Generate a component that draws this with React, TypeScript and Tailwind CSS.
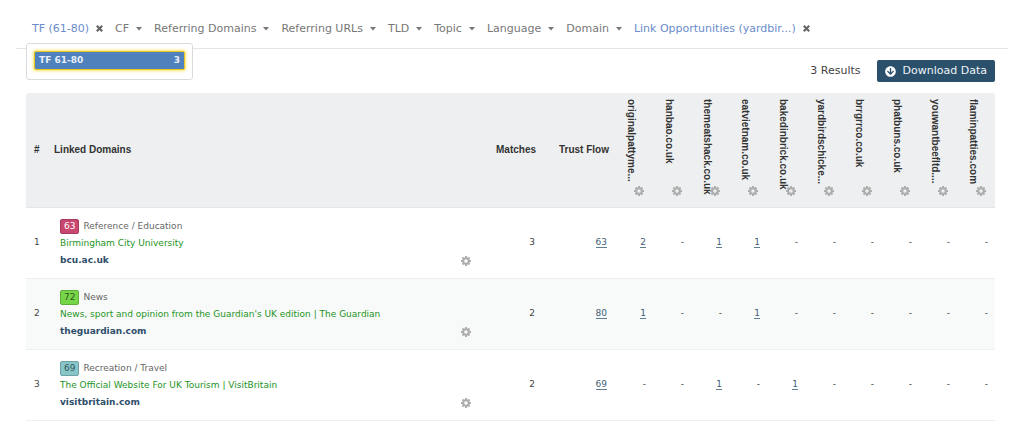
import { FaArrowCircleDown } from "react-icons/fa";
import clsx from "clsx";

type Row = {
  score: number;
  badge: string;
  topic: string;
  title: string;
  domain: string;
  matches: number;
  trustFlow: number;
  links: number[];
};

const FILTERS = [
  { label: "TF (61-80)", active: true },
  { label: "CF" },
  { label: "Referring Domains" },
  { label: "Referring URLs" },
  { label: "TLD" },
  { label: "Topic" },
  { label: "Language" },
  { label: "Domain" },
  { label: "Link Opportunities (yardbir...)", active: true },
];

const SITES = [
  "originalpattyme...",
  "hanbao.co.uk",
  "themeatshack.co.uk",
  "eatvietnam.co.uk",
  "bakedinbrick.co.uk",
  "yardbirdschicke...",
  "brrgrrco.co.uk",
  "phatbuns.co.uk",
  "youwantbeefltd....",
  "flaminpatties.com",
];

const ROWS: Row[] = [
  {
    score: 63,
    badge: "border-[#a83a60] bg-[#c9486f] text-white",
    topic: "Reference / Education",
    title: "Birmingham City University",
    domain: "bcu.ac.uk",
    matches: 3,
    trustFlow: 63,
    links: [2, 0, 1, 1, 0, 0, 0, 0, 0, 0],
  },
  {
    score: 72,
    badge: "border-[#5fae3c] bg-[#77d548] text-[#2f5a1c]",
    topic: "News",
    title: "News, sport and opinion from the Guardian's UK edition | The Guardian",
    domain: "theguardian.com",
    matches: 2,
    trustFlow: 80,
    links: [1, 0, 0, 1, 0, 0, 0, 0, 0, 0],
  },
  {
    score: 69,
    badge: "border-[#6ea2a5] bg-[#88c5c9] text-[#35585a]",
    topic: "Recreation / Travel",
    title: "The Official Website For UK Tourism | VisitBritain",
    domain: "visitbritain.com",
    matches: 2,
    trustFlow: 69,
    links: [0, 0, 1, 0, 1, 0, 0, 0, 0, 0],
  },
];

const TEETH = [0, 45, 90, 135, 180, 225, 270, 315];

function GearButton({ label }: { label: string }) {
  return (
    <button type="button" aria-label={label} className="block shrink-0 text-[#adadad]">
      <svg width="10" height="10" viewBox="0 0 20 20" fill="currentColor">
        <circle cx="10" cy="10" r="5.6" fill="none" stroke="currentColor" strokeWidth="4.2" />
        {TEETH.map((angle) => (
          <rect key={angle} x="8" y="0" width="4" height="4" rx="0.6" transform={`rotate(${angle} 10 10)`} />
        ))}
      </svg>
    </button>
  );
}

function FilterBar() {
  return (
    <nav className="relative mx-4 flex h-[49px] items-end gap-3 border-b border-[#e3e5e5] pb-[11px] pl-4 text-[11px] leading-4">
      {FILTERS.map(({ label, active }) => (
        <button
          key={label}
          type="button"
          className={clsx(
            "flex items-center gap-[7px] whitespace-nowrap",
            active ? "text-[#6a8ccb]" : "text-[#777]"
          )}
        >
          {label}
          {active ? (
            <svg width="7" height="8" viewBox="0 0 7 8" stroke="#666" strokeWidth="2.2">
              <path d="M.8.8l5.4 5.4M6.2.8L.8 6.2" />
            </svg>
          ) : (
            <svg width="6" height="4" viewBox="0 0 6 4" fill="#777">
              <path d="M0 0h6L3 3.5z" />
            </svg>
          )}
        </button>
      ))}
      <div className="absolute top-[43px] left-[10px] w-[167px] rounded-[3px] border border-[#d9dbdc] bg-white px-[7px] pt-[7px] pb-[9px]">
        <button
          type="button"
          className="flex w-full items-center justify-between rounded-[2px] border border-[#e8c820] bg-[#4f81bd] px-1 text-[9px] leading-[17px] font-bold text-[#e8effa] shadow-[0_0_3px_1px_#fde36a]"
        >
          <span>TF 61-80</span>
          <span>3</span>
        </button>
      </div>
    </nav>
  );
}

function ResultsTable() {
  return (
    <table className="w-full table-fixed border-separate border-spacing-0 text-[9px] text-[#444]">
      <colgroup>
        <col className="w-7" />
        <col />
        <col className="w-[61px]" />
        <col className="w-[73px]" />
        {SITES.map((site) => (
          <col key={site} className="w-[38px]" />
        ))}
      </colgroup>
      <thead>
        <tr className="bg-[#edeff0] font-['Liberation_Sans',sans-serif] text-[10px] text-[#333] [&>th]:border-b [&>th]:border-[#e3e6e8]">
          <th className="rounded-tl-[3px] pb-[2px] pl-2 text-left">#</th>
          <th className="pb-[2px] text-left">Linked Domains</th>
          <th className="pr-[6px] pb-[2px] text-right">Matches</th>
          <th className="pr-[6px] pb-[2px] text-right">Trust Flow</th>
          {SITES.map((site) => (
            <th key={site} className="pt-[6px] pb-[11px] pl-[10px] last:rounded-tr-[3px]">
              <div className="flex h-[97px] items-end">
                <span className="h-full leading-3 whitespace-nowrap [writing-mode:vertical-rl] text-left">
                  {site}
                </span>
                <div className="-ml-[3px]">
                  <GearButton label={`Options for ${site}`} />
                </div>
              </div>
            </th>
          ))}
        </tr>
      </thead>
      <tbody>
        {ROWS.map((row, i) => (
          <tr key={row.domain} className="even:bg-[#f8faf9] [&>td]:border-b [&>td]:border-[#eef0f0]">
            <td className="pl-2">{i + 1}</td>
            <td className="pt-[10px] pr-[10px] pb-[9px] pl-[6px]">
              <div className="flex items-end justify-between">
                <div className="leading-[17px]">
                  <div className="flex items-center gap-1 text-[#666]">
                    <span className={clsx("rounded-[2px] border px-[3px] text-[9px] leading-[13px]", row.badge)}>
                      {row.score}
                    </span>
                    {row.topic}
                  </div>
                  <div className="text-[#259425]">{row.title}</div>
                  <a href={`#${row.domain}`} className="block font-bold text-[#2f4f6b]">
                    {row.domain}
                  </a>
                </div>
                <div className="pb-[3px]">
                  <GearButton label={`Options for ${row.domain}`} />
                </div>
              </div>
            </td>
            <td className="pr-[7px] text-right">{row.matches}</td>
            <td className="pr-2 text-right">
              <a href="#trust-flow" className="border-b border-[#5d7d93] text-[#3f5f78]">
                {row.trustFlow}
              </a>
            </td>
            {row.links.map((count, j) => (
              <td key={SITES[j]} className="pr-[7px] text-right">
                {count > 0 ? (
                  <a href="#links" className="border-b border-[#5d7d93] text-[#3f5f78]">
                    {count}
                  </a>
                ) : (
                  "-"
                )}
              </td>
            ))}
          </tr>
        ))}
      </tbody>
    </table>
  );
}

export default function App() {
  return (
    <div className="min-h-screen bg-white font-['DejaVu_Sans',sans-serif]">
      <FilterBar />
      <main className="pt-[11px] pr-[29px] pl-[26px]">
        <div className="mb-[11px] flex items-center justify-end gap-4 text-[11px]">
          <span className="text-[#444]">3 Results</span>
          <button
            type="button"
            className="flex items-center gap-[7px] rounded-[2px] bg-[#2b506c] px-2 py-[3px] leading-4 text-[#eef3f6]"
          >
            <FaArrowCircleDown className="size-[11px] text-white" />
            Download Data
          </button>
        </div>
        <ResultsTable />
      </main>
    </div>
  );
}
